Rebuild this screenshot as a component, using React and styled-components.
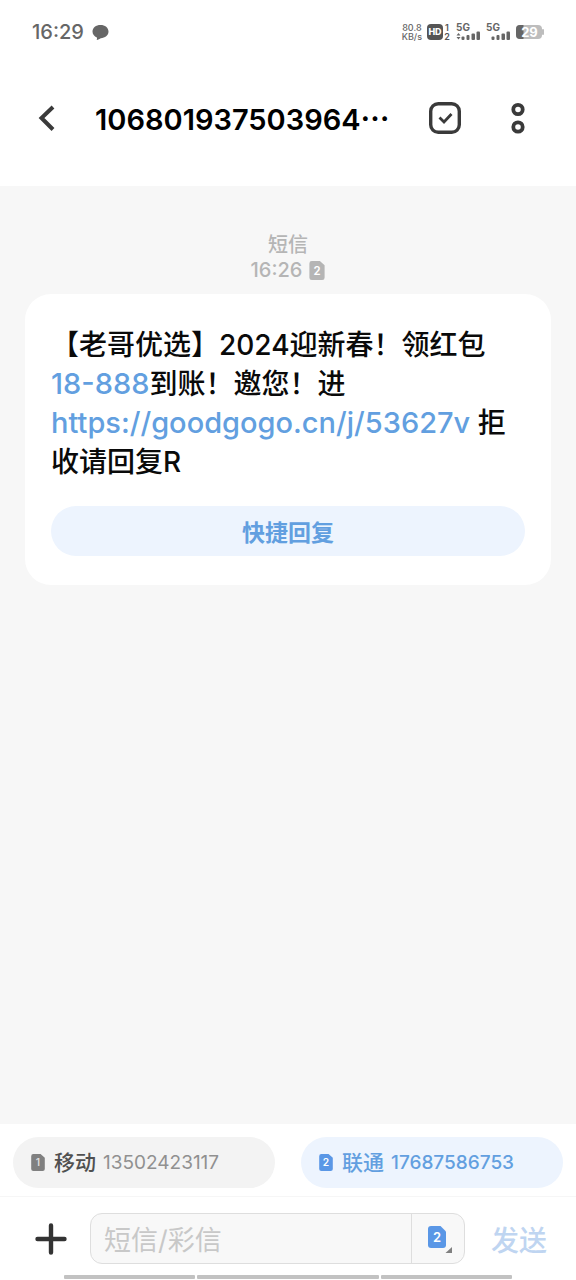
import React from 'react';
import styled, { createGlobalStyle } from 'styled-components';

const GlobalStyle = createGlobalStyle`
    :root {
        --ink: #0a0a0a;
        --icon: #3a3a3a;
        --muted: #b5b5b5;
        --blue: #629fe0;
        --blue-pale: #edf4fe;
        --panel: #f7f7f7;
    }

    * {
        box-sizing: border-box;
    }

    body {
        margin: 0;
        background: #fff;
        color: var(--ink);
        font-family: Inter, 'Noto Sans CJK SC', sans-serif;
    }

    button,
    input {
        font: inherit;
        color: inherit;
        border: none;
        background: none;
        padding: 0;
        margin: 0;
    }

    button {
        cursor: pointer;
    }

    a {
        color: var(--blue);
        text-decoration: none;
    }
`;

const Page = styled.div`
    display: flex;
    flex-direction: column;
    min-height: 100vh;
`;

const StatusBar = styled.div`
    display: flex;
    align-items: center;
    justify-content: space-between;
    height: 64px;
    padding: 0 32px;
    color: #666;
`;

const StatusGroup = styled.div`
    display: flex;
    align-items: center;
    gap: ${props => props.$gap}px;
`;

const Clock = styled.span`
    font-size: 20px;
    line-height: 24px;
    font-weight: 500;
`;

const NetSpeed = styled.div`
    display: flex;
    flex-direction: column;
    align-items: center;
    font-size: 9px;
    line-height: 9px;
    font-weight: 500;
`;

const Header = styled.header`
    display: flex;
    align-items: center;
    height: 122px;
    padding: 0 42px 14px 32px;
    color: var(--icon);
`;

const IconButton = styled.button`
    display: flex;
    align-items: center;
    justify-content: center;
    flex: none;
    width: ${props => props.$size || 32}px;
    height: 48px;
`;

const Title = styled.h1`
    flex: 1;
    min-width: 0;
    margin: 0;
    padding: 4px 0 0 31px;
    color: #000;
    font-size: 29px;
    line-height: 36px;
    font-weight: 600;
    white-space: nowrap;
`;

const HeaderActions = styled.div`
    display: flex;
    gap: 41px;
`;

const Thread = styled.main`
    flex: 1;
    padding: 47px 25px 0 25px;
    background: var(--panel);
`;

const Meta = styled.div`
    display: flex;
    flex-direction: column;
    align-items: center;
    margin-bottom: 11px;
    color: var(--muted);
    font-size: 20px;
    line-height: 25px;
    font-weight: 500;
`;

const MetaRow = styled.div`
    display: flex;
    align-items: center;
    gap: 7px;
`;

const Bubble = styled.article`
    padding: 32px 26px 29px 26px;
    border-radius: 26px;
    background: #fff;
`;

const Message = styled.p`
    margin: 0 0 24px 0;
    font-size: 28px;
    line-height: 39px;
    font-weight: 500;

    a {
        font-size: 29px;
        line-height: 1;
    }
`;

const QuickReply = styled.button`
    display: block;
    width: 100%;
    height: 50px;
    border-radius: 25px;
    background: var(--blue-pale);
    color: var(--blue);
    font-size: 23px;
    font-weight: 700;
`;

const SimRow = styled.div`
    display: grid;
    grid-template-columns: 1fr 1fr;
    gap: 26px;
    padding: 13px 13px 8px 13px;
    border-bottom: 1px solid #f6f6f6;
`;

const SimPill = styled.button`
    display: flex;
    align-items: center;
    height: 51px;
    padding: 0 18px;
    border-radius: 26px;
    background: ${props => (props.$active ? 'var(--blue-pale)' : '#f3f3f3')};
    color: ${props => (props.$active ? 'var(--blue)' : '#909090')};
    font-size: 19px;
    line-height: 24px;
    font-weight: ${props => (props.$active ? 500 : 400)};
`;

const Carrier = styled.span`
    margin: 0 7px 0 9px;
    color: ${props => (props.$active ? 'var(--blue)' : '#505050')};
    font-size: 21px;
    font-weight: 500;
`;

const Composer = styled.form`
    display: flex;
    align-items: center;
    padding: 16px 29px 11px 34px;
`;

const Field = styled.div`
    display: flex;
    flex: 1;
    min-width: 0;
    height: 51px;
    margin: 0 26px 0 22px;
    border: 1px solid #dedede;
    border-radius: 12px;
    background: #f8f8f8;
`;

const TextInput = styled.input`
    flex: 1;
    min-width: 0;
    padding: 4px 13px 0 13px;
    font-size: 27px;
    outline: none;

    &::placeholder {
        color: #c8c8c8;
        opacity: 1;
    }
`;

const SimSwitch = styled.button`
    display: flex;
    align-items: center;
    justify-content: center;
    flex: none;
    width: 53px;
    padding: 3px 0 0 5px;
    border-left: 1px solid #dedede;
`;

const Send = styled.button`
    flex: none;
    padding-top: 4px;
    color: #bfd5f1;
    font-size: 28px;
    line-height: 40px;
    font-weight: 500;
    white-space: nowrap;
`;

const GestureBar = styled.div`
    display: grid;
    grid-template-columns: 131fr 181fr 131fr;
    gap: 2px;
    padding: 0 64px 1px 64px;
`;

const GestureSegment = styled.span`
    height: 4px;
    border-radius: 1px;
    background: #c2c2c2;
`;

const SimIcon = ({ slot, width, height, color, ink }) => (
    <svg width={width} height={height} viewBox="0 0 16 20">
        <path
            d="M2.5 0H11L16 4.5V17.5A2.5 2.5 0 0 1 13.5 20H2.5A2.5 2.5 0 0 1 0 17.5V2.5A2.5 2.5 0 0 1 2.5 0Z"
            fill={color}
        />
        <text
            x="8"
            y="14.5"
            fill={ink}
            fontSize="12"
            fontWeight="600"
            textAnchor="middle"
        >
            {slot}
        </text>
    </svg>
);

const ChatIcon = () => (
    <svg width="17" height="17" viewBox="0 0 17 17" fill="currentColor">
        <path d="M8.5 1C13 1 16.5 3.7 16.5 7.6S13 14.2 8.8 14.2C7.8 14.9 6.3 15.8 4.7 16C5.1 15.2 5.1 14.3 4.9 13.5C2.2 12.5 0.5 10.3 0.5 7.6C0.5 3.7 4 1 8.5 1Z" />
    </svg>
);

const HdIcon = () => (
    <svg width="24" height="26" viewBox="0 -4 24 26" fill="#555">
        <rect x="0" y="1" width="16" height="16" rx="4" />
        <text
            x="8"
            y="12.3"
            fontSize="9"
            fontWeight="800"
            fill="#fff"
            textAnchor="middle"
        >
            HD
        </text>
        <text x="20" y="8" fontSize="9" fontWeight="600" textAnchor="middle">
            1
        </text>
        <text x="20" y="17" fontSize="9" fontWeight="600" textAnchor="middle">
            2
        </text>
    </svg>
);

const SignalIcon = ({ data }) => (
    <svg width="25" height="26" viewBox="0 -4 25 26" fill="currentColor">
        <text x="0" y="8" fontSize="10" fontWeight="700">
            5G
        </text>
        {data && (
            <path d="M0.5 12.5L2.5 10L4.5 12.5ZM0.5 14L2.5 16.5L4.5 14Z" />
        )}
        <rect x="5.5" y="13.5" width="3" height="3.5" rx="1" />
        <rect x="10.5" y="12" width="3" height="5" rx="1" />
        <rect x="15.5" y="10.5" width="3.5" height="6.5" rx="1" />
        <rect x="20.5" y="8.5" width="3.5" height="8.5" rx="1" />
    </svg>
);

const BatteryIcon = () => (
    <svg width="28" height="18" viewBox="0 -2 28 18">
        <rect width="26" height="14" rx="4" fill="#bdbdbd" />
        <rect x="26" y="4" width="2" height="6" rx="1" fill="#bdbdbd" />
        <path d="M4 0H7.5V14H4A4 4 0 0 1 0 10V4A4 4 0 0 1 4 0Z" fill="#666" />
        <text
            x="13.5"
            y="11.5"
            fontSize="13"
            fontWeight="700"
            fill="#fff"
            textAnchor="middle"
        >
            29
        </text>
    </svg>
);

const BackIcon = () => (
    <svg width="32" height="32" viewBox="0 0 32 32" fill="none">
        <path d="M21 5L9.5 16L21 27.5" stroke="currentColor" strokeWidth="4" />
    </svg>
);

const CheckIcon = () => (
    <svg width="32" height="32" viewBox="0 0 32 32" fill="none">
        <rect
            x="1.7"
            y="1.7"
            width="28.6"
            height="28.6"
            rx="7.5"
            stroke="currentColor"
            strokeWidth="3.4"
        />
        <path
            d="M10.5 15.5L15 20L22.5 12"
            stroke="currentColor"
            strokeWidth="2.8"
        />
    </svg>
);

const MoreIcon = () => (
    <svg width="14" height="32" viewBox="0 0 14 32" fill="none">
        <circle cx="7" cy="7.5" r="4.7" stroke="currentColor" strokeWidth="3.8" />
        <circle cx="7" cy="25" r="4.7" stroke="currentColor" strokeWidth="3.8" />
    </svg>
);

const PlusIcon = () => (
    <svg width="32" height="32" viewBox="0 0 32 32" fill="none">
        <path
            d="M16 2.5V29.5M2.5 16H29.5"
            stroke="#333"
            strokeWidth="4.4"
            strokeLinecap="round"
        />
    </svg>
);

const ActiveSimIcon = () => (
    <svg width="24" height="28" viewBox="0 0 24 28">
        <path
            d="M3 0H12.5L18 5.5V19A3 3 0 0 1 15 22H3A3 3 0 0 1 0 19V3A3 3 0 0 1 3 0Z"
            fill="#5a97e6"
        />
        <text
            x="9"
            y="16"
            fill="#fff"
            fontSize="13"
            fontWeight="600"
            textAnchor="middle"
        >
            2
        </text>
        <path d="M24 21V27H17.5Z" fill="#808080" />
    </svg>
);

const App = () => (
    <>
        <GlobalStyle />
        <Page>
            <StatusBar>
                <StatusGroup $gap={8}>
                    <Clock>16:29</Clock>
                    <ChatIcon />
                </StatusGroup>
                <StatusGroup $gap={5}>
                    <NetSpeed>
                        <span>80.8</span>
                        <span>KB/s</span>
                    </NetSpeed>
                    <HdIcon />
                    <SignalIcon data />
                    <SignalIcon />
                    <BatteryIcon />
                </StatusGroup>
            </StatusBar>

            <Header>
                <IconButton type="button" aria-label="返回">
                    <BackIcon />
                </IconButton>
                <Title>106801937503964⋯</Title>
                <HeaderActions>
                    <IconButton type="button" aria-label="选择">
                        <CheckIcon />
                    </IconButton>
                    <IconButton type="button" aria-label="更多">
                        <MoreIcon />
                    </IconButton>
                </HeaderActions>
            </Header>

            <Thread>
                <Meta>
                    <span>短信</span>
                    <MetaRow>
                        <span>16:26</span>
                        <SimIcon
                            slot="2"
                            width={16}
                            height={19}
                            color="#b5b5b5"
                            ink="#fff"
                        />
                    </MetaRow>
                </Meta>
                <Bubble>
                    <Message>
                        【老哥优选】2024迎新春！领红包
                        <a href="tel:18-888">18-888</a>到账！邀您！进{' '}
                        <a href="https://goodgogo.cn/j/53627v">
                            https://goodgogo.cn/j/53627v
                        </a>{' '}
                        拒收请回复R
                    </Message>
                    <QuickReply type="button">快捷回复</QuickReply>
                </Bubble>
            </Thread>

            <SimRow>
                <SimPill type="button">
                    <SimIcon
                        slot="1"
                        width={14}
                        height={17}
                        color="#808080"
                        ink="#ddd"
                    />
                    <Carrier>移动</Carrier>
                    13502423117
                </SimPill>
                <SimPill type="button" $active>
                    <SimIcon
                        slot="2"
                        width={14}
                        height={17}
                        color="#5a97e6"
                        ink="#fff"
                    />
                    <Carrier $active>联通</Carrier>
                    17687586753
                </SimPill>
            </SimRow>

            <Composer onSubmit={e => e.preventDefault()}>
                <IconButton type="button" aria-label="添加" $size={34}>
                    <PlusIcon />
                </IconButton>
                <Field>
                    <TextInput
                        type="text"
                        aria-label="短信/彩信"
                        placeholder="短信/彩信"
                    />
                    <SimSwitch type="button" aria-label="切换SIM卡">
                        <ActiveSimIcon />
                    </SimSwitch>
                </Field>
                <Send type="submit">发送</Send>
            </Composer>

            <GestureBar>
                <GestureSegment />
                <GestureSegment />
                <GestureSegment />
            </GestureBar>
        </Page>
    </>
);

export default App;
